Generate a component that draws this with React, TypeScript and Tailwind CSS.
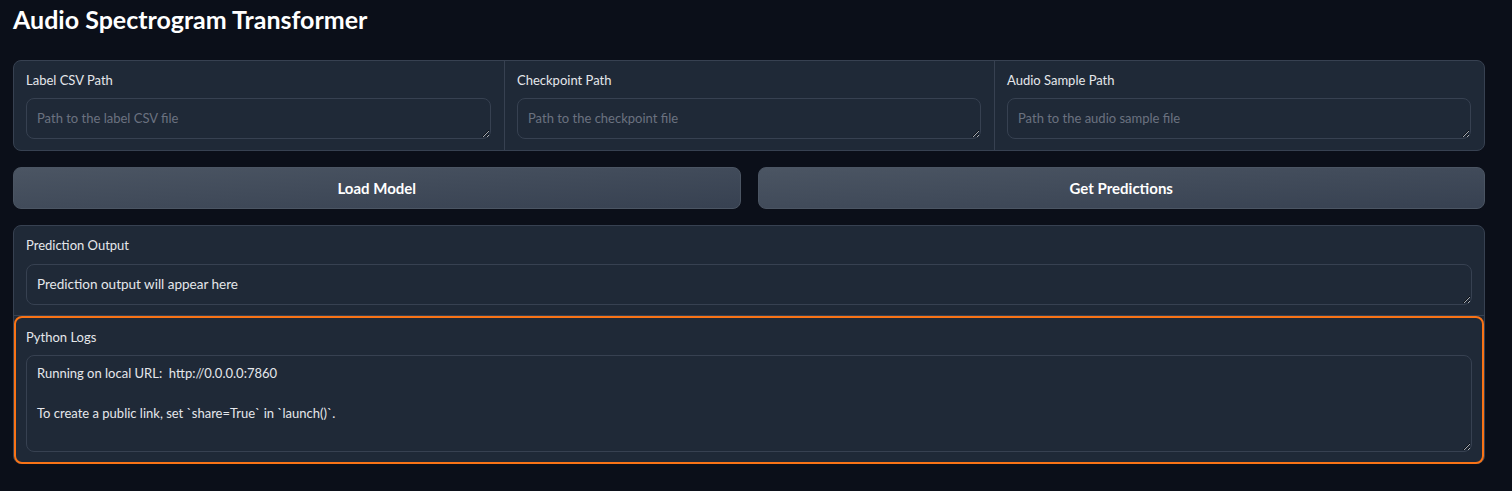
import React from "react";

const font = "font-['Lato','Noto_Sans',sans-serif]";

function Field({ label, placeholder, first }: { label: string; placeholder: string; first?: boolean }) {
  return (
    <div className={`flex flex-col pl-[12px] pr-[13px] pt-[9px] pb-[11px] ${first ? "" : "border-l border-[#374151]"}`}>
      <div className="text-[13px] leading-[20px] text-[#e5e7eb] mb-[8px]">{label}</div>
      <textarea
        rows={1}
        placeholder={placeholder}
        className="h-[41px] w-full resize-y rounded-[8px] border border-[#374151] bg-[#1f2937] px-[10px] py-[9px] text-[13px] leading-[20px] text-[#e5e7eb] placeholder:text-[#6b7280] outline-none [color-scheme:dark]"
      />
    </div>
  );
}

export default function App() {
  return (
    <div className={`min-h-[491px] bg-[#0b0f19] pl-[13px] pr-[27px] pt-[3px] pb-[28px] ${font} [color-scheme:dark]`}>
      <h1 className="text-[25px] font-bold leading-[32px] text-white">Audio Spectrogram Transformer</h1>

      <div className="mt-[25px] grid grid-cols-3 rounded-[8px] border border-[#374151] bg-[#1f2937]">
        <Field first label="Label CSV Path" placeholder="Path to the label CSV file" />
        <Field label="Checkpoint Path" placeholder="Path to the checkpoint file" />
        <Field label="Audio Sample Path" placeholder="Path to the audio sample file" />
      </div>

      <div className="mt-[16px] grid grid-cols-2 gap-[17px]">
        <button className="h-[42px] rounded-[8px] border border-[#4b5563] bg-gradient-to-br from-[#4b5563] to-[#374151] text-[15px] font-bold text-white">
          Load Model
        </button>
        <button className="h-[42px] rounded-[8px] border border-[#4b5563] bg-gradient-to-br from-[#4b5563] to-[#374151] text-[15px] font-bold text-white">
          Get Predictions
        </button>
      </div>

      <div className="mt-[16px] flex flex-col rounded-[8px] border border-[#374151] bg-[#1f2937]">
        <div className="flex flex-col border-b border-[#374151] px-[12px] pt-[9px] pb-[10px]">
          <div className="mb-[9px] text-[13px] leading-[20px] text-[#e5e7eb]">Prediction Output</div>
          <textarea
            rows={1}
            readOnly
            defaultValue="Prediction output will appear here"
            className="h-[41px] w-full resize-y rounded-[8px] border border-[#374151] bg-[#1f2937] px-[10px] py-[9px] text-[13.5px] leading-[20px] text-[#e5e7eb] outline-none"
          />
        </div>
        <div className="-mb-px flex flex-col rounded-[8px] border-2 border-[#f97316] bg-[#1f2937] px-[10px] pt-[9px] pb-[10px]">
          <div className="mb-[8px] text-[13px] leading-[20px] text-[#e5e7eb]">Python Logs</div>
          <textarea
            readOnly
            defaultValue={"Running on local URL:  http://0.0.0.0:7860\n\nTo create a public link, set `share=True` in `launch()`."}
            className="h-[97px] w-full resize-y rounded-[8px] border border-[#374151] bg-[#1f2937] px-[10px] py-[7px] text-[13px] leading-[20px] text-[#e5e7eb] outline-none"
          />
        </div>
      </div>
    </div>
  );
}
